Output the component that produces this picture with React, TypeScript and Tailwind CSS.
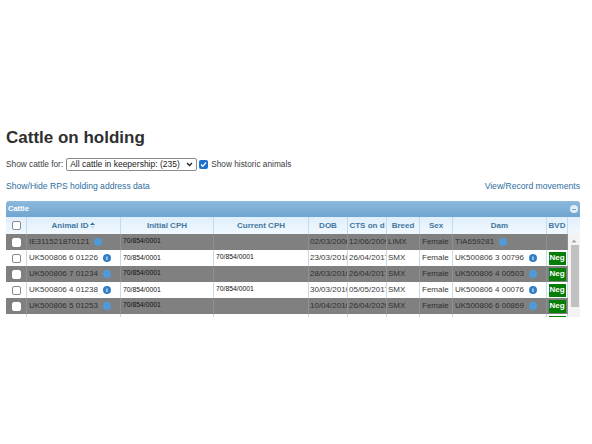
const cols = "grid grid-cols-[21px_94px_93px_95px_39px_39px_33px_33px_94px_21px]";

type Row = { id: string; init: string; cur: string; dob: string; cts: string; breed: string; dam: string; info: boolean; neg: boolean; dark: boolean };

const rows: Row[] = [
  { id: "IE311521870121", init: "70/854/0001", cur: "", dob: "02/03/2006", cts: "12/06/2009", breed: "LIMX", dam: "TIA659281", info: true, neg: false, dark: true },
  { id: "UK500806 6 01226", init: "70/854/0001", cur: "70/854/0001", dob: "23/03/2010", cts: "26/04/2017", breed: "SMX", dam: "UK500806 3 00796", info: true, neg: true, dark: false },
  { id: "UK500806 7 01234", init: "70/854/0001", cur: "", dob: "28/03/2010", cts: "26/04/2017", breed: "SMX", dam: "UK500806 4 00503", info: true, neg: true, dark: true },
  { id: "UK500806 4 01238", init: "70/854/0001", cur: "70/854/0001", dob: "30/03/2010", cts: "05/05/2017", breed: "SMX", dam: "UK500806 4 00076", info: true, neg: true, dark: false },
  { id: "UK500806 5 01253", init: "70/854/0001", cur: "", dob: "10/04/2010", cts: "26/04/2020", breed: "SMX", dam: "UK500806 6 00869", info: true, neg: true, dark: true },
  { id: "", init: "", cur: "", dob: "", cts: "", breed: "", dam: "", info: false, neg: true, dark: false },
];

function Info({ dark }: { dark: boolean }) {
  return (
    <span className={`ml-[5px] inline-flex h-[8px] w-[8px] shrink-0 items-center justify-center rounded-full text-[6px] font-bold leading-none ${dark ? "bg-[#4f9ad8] text-[#4f9ad8]" : "bg-[#2f7fc8] text-white"}`}>
      i
    </span>
  );
}

function Box({ dark }: { dark: boolean }) {
  return <span className={`h-[9px] w-[9px] rounded-[2px] border ${dark ? "border-white bg-white" : "border-[#8a8a8a] bg-white"}`} />;
}

function Head({ children, extra = "" }: { children?: React.ReactNode; extra?: string }) {
  return (
    <div className={`flex items-center justify-center overflow-hidden whitespace-nowrap border-r border-[#c5dbec] text-[8px] font-bold text-[#44779f] ${extra}`}>
      {children}
    </div>
  );
}

function Cell({ children, extra = "", dark }: { children?: React.ReactNode; extra?: string; dark: boolean }) {
  return (
    <div className={`flex items-center overflow-hidden whitespace-nowrap border-r ${dark ? "border-[#8f8f8f]" : "border-[#c5dbec]"} ${extra}`}>
      {children}
    </div>
  );
}

export default function App() {
  return (
    <div className="h-[444px] w-[592px] overflow-hidden bg-white pl-[6px] pt-[127px] font-['Liberation_Sans',Arial,sans-serif] text-[#333333]">
      <h1 className="h-[22px] text-[17px] font-bold leading-[22px] text-[#2f2f2f]">Cattle on holding</h1>
      <div className="mt-[8px] flex h-[14px] items-center text-[8.3px] text-[#3c3c3c]">
        <span className="whitespace-nowrap">Show cattle for:</span>
        <span className="ml-[3px] flex h-[13px] w-[131px] items-center justify-between rounded-[2px] border border-[#8a8a8a] pl-[3px] pr-[3px] text-[8.5px] text-[#222222]">
          <span className="whitespace-nowrap">All cattle in keepership: (235)</span>
          <svg width="7" height="5" viewBox="0 0 7 5"><path d="M1 1l2.5 2.5L6 1" fill="none" stroke="#222222" strokeWidth="1.3" /></svg>
        </span>
        <span className="ml-[2px] flex h-[9px] w-[9px] items-center justify-center rounded-[2px] bg-[#1a6fd0]">
          <svg width="7" height="7" viewBox="0 0 7 7"><path d="M1 3.5l1.8 1.8L6 1.5" fill="none" stroke="white" strokeWidth="1.3" /></svg>
        </span>
        <span className="ml-[3px] whitespace-nowrap">Show historic animals</span>
      </div>
      <div className="mt-[9px] flex h-[12px] w-[574px] items-center justify-between text-[8.6px] text-[#2e6e9e]">
        <span>Show/Hide RPS holding address data</span>
        <span>View/Record movements</span>
      </div>
      <div className="relative mt-[9px] w-[574px]">
        <div className="flex h-[16px] items-center justify-between rounded-t-[3px] bg-gradient-to-b from-[#8db9dc] to-[#6fa5d1] pl-[2px] pr-[2px] text-[7.5px] font-bold text-white">
          <span>Cattle</span>
          <span className="flex h-[8px] w-[8px] items-center justify-center rounded-full bg-[#e4eef7]">
            <span className="h-[1px] w-[4px] bg-[#6fa5d1]" />
          </span>
        </div>
        <div className={`${cols} h-[17px] bg-gradient-to-b from-[#dfeffc] to-[#f1f8fe]`}>
          <Head><Box dark={false} /></Head>
          <Head>
            Animal ID
            <svg className="ml-[2px]" width="5" height="7" viewBox="0 0 5 7"><path d="M2.5 0.5L5 3H0z" fill="#2e6e9e" /><path d="M2.5 6.5L5 4H0z" fill="#c5dbec" /></svg>
          </Head>
          <Head>Initial CPH</Head>
          <Head>Current CPH</Head>
          <Head>DOB</Head>
          <Head>CTS on d</Head>
          <Head>Breed</Head>
          <Head>Sex</Head>
          <Head>Dam</Head>
          <Head>BVD</Head>
        </div>
        <div className="h-[83px] overflow-hidden">
          {rows.map((r, i) => (
            <div key={i} className={`${cols} h-[16px] text-[8px] ${r.dark ? "bg-[#808080] text-[#303030]" : "bg-white text-[#3a3a3a]"}`}>
              <Cell dark={r.dark} extra="justify-center"><Box dark={r.dark} /></Cell>
              <Cell dark={r.dark} extra="pl-[2px]">{r.id}{r.info && <Info dark={r.dark} />}</Cell>
              <Cell dark={r.dark} extra={`pl-[2px] text-[6.8px] text-[#111111] ${r.dark ? "items-start pt-[2px]" : ""}`}>{r.init}</Cell>
              <Cell dark={r.dark} extra="pl-[2px] text-[6.8px] text-[#111111] pb-[2px]">{r.cur}</Cell>
              <Cell dark={r.dark} extra="pl-[1px]">{r.dob}</Cell>
              <Cell dark={r.dark} extra="pl-[1px]">{r.cts}</Cell>
              <Cell dark={r.dark} extra="pl-[1px]">{r.breed}</Cell>
              <Cell dark={r.dark} extra="pl-[2px]">{r.dam ? "Female" : ""}</Cell>
              <Cell dark={r.dark} extra="pl-[2px]">{r.dam}{r.info && r.dam && <Info dark={r.dark} />}</Cell>
              <Cell dark={r.dark} extra="justify-center">
                {r.neg && <span className="flex h-[13px] w-[17px] items-center justify-center bg-[#067d06] text-[8px] font-bold text-white">Neg</span>}
              </Cell>
            </div>
          ))}
        </div>
        <div className="absolute bottom-0 right-0 top-[33px] w-[12px] bg-[#f3f3f3]">
          <svg className="absolute left-[3px] top-[5px]" width="6" height="4" viewBox="0 0 6 4"><path d="M3 0.5L5.5 3.5H0.5z" fill="#a8a8a8" /></svg>
          <div className="absolute left-[3px] right-[1px] top-[11px] h-[62px] bg-[#c1c1c1]" />
        </div>
      </div>
    </div>
  );
}
